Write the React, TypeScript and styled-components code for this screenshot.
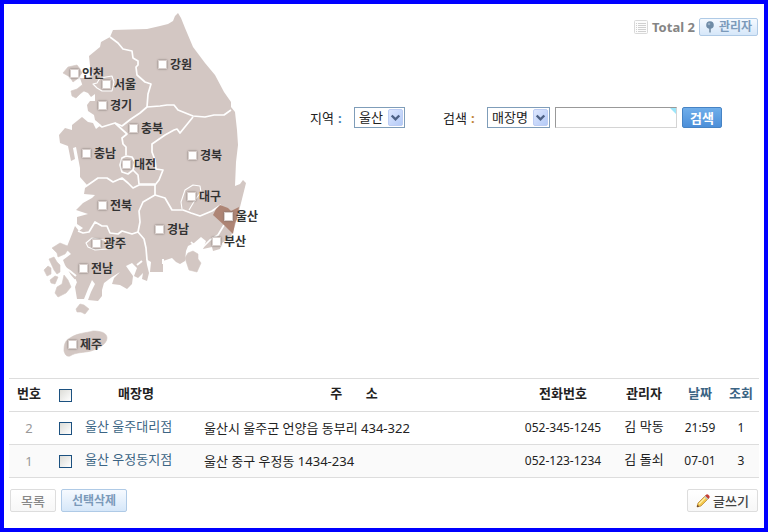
import React from "react";
import styled, { createGlobalStyle, css } from "styled-components";

const GlobalStyle = createGlobalStyle`
  *, *::before, *::after { box-sizing: border-box; }
  body {
    margin: 0;
    background: #fff;
    color: #222;
    font: 13px/18px "Noto Sans", "Noto Sans CJK KR", sans-serif;
  }
  button, select, input { font: inherit; color: inherit; margin: 0; }
  a { color: #3b6484; text-decoration: none; }
`;

const Frame = styled.div`
  min-height: 100vh;
  padding: 0 5px;
  border: 4px solid #00f;
`;

const Top = styled.section`
  display: flex;
  height: 374px;
`;

const MapCanvas = styled.div`
  position: relative;
  flex: none;
  width: 230px;
  height: 352px;
  margin: 4px 40px 0 31px;
`;

const MapDrawing = styled.svg`
  display: block;
  width: 100%;
  height: 100%;
`;

const Pin = styled.label<{ $x: number; $y: number }>`
  position: absolute;
  left: ${(p) => p.$x - 44}px;
  top: ${(p) => p.$y - 17}px;
  display: flex;
  align-items: center;
  gap: 3px;
  font: bold 12px/18px "Noto Sans CJK KR", sans-serif;
  color: #333;
  white-space: nowrap;
`;

const PinBox = styled.input`
  appearance: none;
  width: 9px;
  height: 9px;
  background: #fff;
  border: 1px solid #d8cfcc;
  box-shadow: 0 0 2px #776c69;
`;

const Side = styled.div`
  flex: 1;
  min-width: 0;
  display: flex;
  flex-direction: column;
`;

const TopBar = styled.div`
  display: flex;
  align-items: center;
  justify-content: flex-end;
  gap: 4px;
  margin-top: 14px;
  padding-right: 1px;
  height: 18px;
`;

const Total = styled.strong`
  font: bold 13px/18px "Noto Sans", sans-serif;
  color: #858585;
`;

const SearchForm = styled.form`
  display: flex;
  align-items: center;
  gap: 5px;
  margin-top: 71px;
`;

const FieldLabel = styled.label`
  width: 39px;
  padding-top: 1px;
  white-space: nowrap;
`;

const Colon = styled.span<{ $color: string }>`
  margin-left: 4px;
  font-weight: bold;
  color: ${(p) => p.$color};
`;

const SelectWrap = styled.span<{ $width: number; $after?: number }>`
  position: relative;
  flex: none;
  width: ${(p) => p.$width}px;
  height: 21px;
  margin-right: ${(p) => p.$after ?? 0}px;
`;

const Select = styled.select`
  appearance: none;
  display: block;
  width: 100%;
  height: 21px;
  padding: 0 18px 1px 4px;
  border: 1px solid #7f9db9;
  border-radius: 0;
  background: #fff;
  line-height: 18px;
`;

const SelectArrow = styled.svg`
  position: absolute;
  top: 2px;
  right: 2px;
  width: 15px;
  height: 17px;
  pointer-events: none;
`;

const QueryWrap = styled.span`
  position: relative;
  flex: none;
  width: 122px;
  height: 21px;
`;

const Query = styled.input`
  display: block;
  width: 100%;
  height: 21px;
  padding: 0 4px;
  border: 1px solid;
  border-color: #999 #d4d4d4 #d4d4d4 #999;
  background: #fff;
`;

const Corner = styled.span`
  position: absolute;
  top: 1px;
  right: 1px;
  border-top: 6px solid #9ce6fa;
  border-left: 6px solid transparent;
`;

const SearchButton = styled.button`
  flex: none;
  width: 40px;
  height: 21px;
  padding: 0;
  border: 1px solid #4683c4;
  border-radius: 2px;
  background: linear-gradient(#70aeea, #4c8fd9);
  color: #fff;
  font-weight: bold;
  line-height: 18px;
`;

const Table = styled.table`
  width: 100%;
  table-layout: fixed;
  border-collapse: collapse;
  border-top: 1px solid #ddd;
`;

const Col = styled.col<{ $width?: number }>`
  width: ${(p) => (p.$width ? `${p.$width}px` : "auto")};
`;

const Row = styled.tr<{ $shaded?: boolean }>`
  height: 33px;
  border-bottom: 1px solid #ddd;
  background: ${(p) => (p.$shaded ? "#fafafa" : "#fff")};
`;

const Head = styled.th`
  padding: 0 0 4px;
  white-space: pre;
  font-weight: bold;
`;

const cellNumber = css`
  font-size: 12px;
`;

const Cell = styled.td<{ $kind?: "index" | "name" | "address" | "number" }>`
  padding: ${(p) =>
    p.$kind === "name" ? "0 0 4px 6px" : p.$kind === "address" ? "0 0 0 11px" : p.$kind ? "0" : "0 0 4px"};
  text-align: ${(p) => (p.$kind === "name" || p.$kind === "address" ? "left" : "center")};
  color: ${(p) => (p.$kind === "index" ? "#999" : "#222")};
  white-space: nowrap;
  ${(p) => p.$kind === "number" && cellNumber}
`;

const CheckCell = styled.td`
  padding: 0 0 0 2px;
  text-align: center;
`;

const Check = styled.input`
  appearance: none;
  display: block;
  width: 13px;
  height: 13px;
  margin: 0 auto;
  border: 1px solid #1c5180;
  background: linear-gradient(135deg, #dcdcd7, #fff);
`;

const Footer = styled.footer`
  display: flex;
  gap: 5px;
  padding: 11px 1px 16px;
`;

const Button = styled.button<{ $blue?: boolean; $small?: boolean; $end?: boolean }>`
  display: flex;
  align-items: center;
  justify-content: center;
  gap: ${(p) => (p.$small ? 4 : 3)}px;
  height: ${(p) => (p.$small ? 18 : 23)}px;
  padding: 0 ${(p) => (p.$small ? 5 : p.$end ? 8 : 10)}px;
  margin-left: ${(p) => (p.$end ? "auto" : "0")};
  border: 1px solid ${(p) => (p.$blue ? "#afcae6" : "#ddd")};
  border-radius: 2px;
  background: ${(p) => (p.$blue ? "linear-gradient(#f6faff, #d6e7f9)" : "linear-gradient(#fff, #f7f7f7)")};
  color: ${(p) => (p.$blue ? "#7b9aba" : p.$end ? "#444" : "#888")};
  font-size: ${(p) => (p.$blue ? 12 : 13)}px;
  font-weight: ${(p) => (p.$blue ? "bold" : 500)};
  line-height: 16px;
  white-space: nowrap;
`;

const Icon = styled.svg`
  flex: none;
  display: block;
`;

const regions: [string, number, number][] = [
  ["강원", 162, 64], ["인천", 74, 73], ["서울", 106, 84], ["경기", 102, 105],
  ["충북", 133, 128], ["충남", 86, 153], ["대전", 126, 164], ["경북", 192, 155],
  ["전북", 102, 205], ["대구", 191, 196], ["울산", 228, 216], ["경남", 159, 229],
  ["부산", 216, 241], ["광주", 96, 243], ["전남", 83, 268], ["제주", 72, 344],
];

const mainland =
  "M113 30 147 29 160 26 168 24 173 21 175 16 178 13 181 18 185 28 193 47 205 63 215 75 224 92 231 102 231 107 235 112 237 130 238 145 236 162 235 186 240 184 243 180 246 183 243 195 240 207 237 219 234 229 230 238 222 243 220 249 213 251 212 247 203 249 206 241 201 237 194 243 188 246 186 251 185 261 180 264 176 262 172 258 163 261 163 272 150 272 151 262 146 259 147 265 149 273 147 281 142 279 143 273 138 278 134 276 137 268 132 263 126 266 133 276 132 284 127 289 120 285 112 284 114 278 120 272 112 277 104 283 102 290 102 296 98 301 88 300 91 292 95 284 92 280 88 289 84 299 77 299 75 287 77 282 71 275 65 265 63 260 71 254 66 249 72 234 75 226 79 231 83 228 77 224 77 217 88 214 76 210 83 203 92 198 95 195 84 194 85 188 87 185 80 177 80 168 76 147 73 148 75 159 71 161 68 146 60 143 59 135 65 128 72 130 72 125 82 117 88 122 93 123 96 129 101 125 95 120 94 115 88 111 87 105 90 101 95 101 95 94 91 97 88 93 83 91 82 84 80 78 88 78 93 75 90 66 89 56 100 47 101 42 110 37Z";

const borders = [
  "M110 37 118 43 123 49 132 51 133 58 138 61 138 65 136 67 137 75 145 82 151 84 148 94 147 107 160 106 167 105 174 105 178 110 193 116 205 117 214 115 224 115 231 110",
  "M147 107 140 113 131 119 122 126 115 123 102 127 95 122",
  "M115 123 127 134 122 138 123 144 126 147 126 155",
  "M126 156 132 157 135 162 133 170 128 174 122 172 120 165 122 158Z",
  "M133 170 138 175 139 184 155 184",
  "M85 187 98 178 107 178 113 182 122 178 128 183 133 188 139 185 155 185 155 195",
  "M193 117 180 133 177 129 174 130 165 135 152 144 152 152 155 160 156 169 163 170 159 180 155 185",
  "M155 195 165 198 172 210 183 210 191 213 200 216 212 211 221 205",
  "M155 195 143 202 139 211 140 222 138 232 144 239 146 248 147 260",
  "M78 231 83 233 89 232 95 222 102 226 107 226 110 233 118 234 122 231 132 234 138 232",
  "M224 225 218 235 210 240 201 249",
  "M191 242 195 246 203 245",
];

const thinBorders = [
  "M86 243 92 238 104 240 111 245 107 249 95 250 88 247Z",
  "M182 209 181 202 185 190 193 185 200 186 201 192 195 200 189 210",
  "M93 84 97 83 100 78 112 76 114 82 112 91 102 91 97 88Z",
];

const islands = [
  "M63 73 68 67 77 65 80 69 82 73 77 79 73 82 70 77Z",
  "M71 91 77 89 82 85 85 90 80 94 76 98 72 96Z",
  "M185 258 188 253 193 251 198 254 198 259 201 263 197 272 189 270Z",
  "M52 248 60 243 70 247 65 254 58 257 57 253Z",
  "M44 270 48 266 51 268 51 274 47 276Z",
  "M49 259 54 257 57 262 60 265 60 272 57 274 54 270Z",
  "M50 280 55 276 58 277 55 284 51 283Z",
  "M55 293 57 287 62 284 64 275 68 280 71 287 66 293 58 297Z",
  "M76 309 80 304 84 305 89 309 85 314 81 312 77 312Z",
  "M64 351C64 344 65 341 70 338C77 333 86 333 93 331C99 331 107 332 107 338C107 344 98 349 91 351C83 353 76 352 70 356C66 357 65 354 64 351Z",
];

function KoreaMap() {
  return (
    <MapCanvas>
      <MapDrawing viewBox="40 8 230 352" aria-hidden="true">
        <path d={mainland} fill="#d3c7c3" />
        {islands.map((d) => <path key={d} d={d} fill="#d3c7c3" stroke="#d3c7c3" strokeWidth=".6" />)}
        <g fill="none" stroke="#fff" strokeLinejoin="round">
          {borders.map((d) => <path key={d} d={d} strokeWidth="1.7" />)}
          {thinBorders.map((d) => <path key={d} d={d} strokeWidth="1.1" />)}
          <path d="M64 267 70 271 76 276M68 276 71 282 76 280M137 265 142 261M163 259 163 264" strokeWidth="2" />
        </g>
        <path d="M213 215 216 209 220 205 228 208 231 211 239 207 237 219 235 223 233 234 229 230 224 225Z" fill="#ae8575" />
      </MapDrawing>
      {regions.map(([name, x, y]) => (
        <Pin key={name} $x={x} $y={y}>
          <PinBox type="checkbox" />
          {name}
        </Pin>
      ))}
    </MapCanvas>
  );
}

function Arrow() {
  return (
    <SelectArrow viewBox="0 0 15 17" aria-hidden="true">
      <defs>
        <linearGradient id="arrowFill" x2="1" y2="1">
          <stop stopColor="#dfe8ff" />
          <stop offset="1" stopColor="#b2c9f6" />
        </linearGradient>
      </defs>
      <rect x=".5" y=".5" width="14" height="16" rx="1.5" fill="url(#arrowFill)" stroke="#bdcdf4" />
      <path d="m3.7 6.5 3.8 3.8 3.8-3.8" fill="none" stroke="#4d6185" strokeWidth="2.4" />
    </SelectArrow>
  );
}

const stores = [
  { no: 2, name: "울산 울주대리점", address: "울산시 울주군 언양읍 동부리 434-322", phone: "052-345-1245", manager: "김 막동", date: "21:59", views: 1 },
  { no: 1, name: "울산 우정동지점", address: "울산 중구 우정동 1434-234", phone: "052-123-1234", manager: "김 돌쇠", date: "07-01", views: 3 },
];

export default function App() {
  return (
    <>
      <GlobalStyle />
      <Frame>
        <Top>
          <KoreaMap />
          <Side>
            <TopBar>
              <Icon width="14" height="14" viewBox="0 0 14 14" aria-hidden="true">
                <rect x=".5" y=".5" width="13" height="13" rx="1" fill="#fcfcfc" stroke="#d9d9d9" />
                <path d="M2 3.5h1M4 3.5h8M2 5.5h1M4 5.5h8M2 7.5h1M4 7.5h8M2 9.5h1M4 9.5h8M2 11.5h1M4 11.5h8" stroke="#d0d0d0" />
              </Icon>
              <Total>Total 2</Total>
              <Button type="button" $blue $small>
                <Icon width="10" height="12" viewBox="0 0 10 12" aria-hidden="true">
                  <path d="M4 6h2v5.500H4z" fill="#8aa0b5" />
                  <circle cx="5" cy="4" r="3.8" fill="#6f8ba6" />
                  <circle cx="4" cy="3" r="1.3" fill="#9ab0c5" />
                </Icon>
                관리자
              </Button>
            </TopBar>
            <SearchForm onSubmit={(e) => e.preventDefault()}>
              <FieldLabel htmlFor="region">지역<Colon $color="#3f7cae">:</Colon></FieldLabel>
              <SelectWrap $width={51} $after={33}>
                <Select id="region" defaultValue="울산">
                  {regions.map(([name]) => <option key={name}>{name}</option>)}
                </Select>
                <Arrow />
              </SelectWrap>
              <FieldLabel htmlFor="query">검색<Colon $color="#c08436">:</Colon></FieldLabel>
              <SelectWrap $width={63}>
                <Select aria-label="검색 항목">
                  <option>매장명</option>
                </Select>
                <Arrow />
              </SelectWrap>
              <QueryWrap>
                <Query id="query" type="text" />
                <Corner />
              </QueryWrap>
              <SearchButton type="submit">검색</SearchButton>
            </SearchForm>
          </Side>
        </Top>
        <Table>
          <colgroup>
            <Col $width={40} />
            <Col $width={30} />
            <Col $width={114} />
            <Col />
            <Col $width={96} />
            <Col $width={66} />
            <Col $width={46} />
            <Col $width={36} />
          </colgroup>
          <thead>
            <Row>
              <Head>번호</Head>
              <CheckCell as="th"><Check type="checkbox" aria-label="전체 선택" /></CheckCell>
              <Head>매장명</Head>
              <Head>{"주\u00a0\u00a0\u00a0\u00a0\u00a0\u00a0\u00a0소"}</Head>
              <Head>전화번호</Head>
              <Head>관리자</Head>
              <Head><a href="#date">날짜</a></Head>
              <Head><a href="#views">조회</a></Head>
            </Row>
          </thead>
          <tbody>
            {stores.map((s) => (
              <Row key={s.no} $shaded={s.no === 1}>
                <Cell $kind="index">{s.no}</Cell>
                <CheckCell><Check type="checkbox" aria-label={s.name} /></CheckCell>
                <Cell $kind="name"><a href={`#store-${s.no}`}>{s.name}</a></Cell>
                <Cell $kind="address">{s.address}</Cell>
                <Cell $kind="number">{s.phone}</Cell>
                <Cell>{s.manager}</Cell>
                <Cell $kind="number">{s.date}</Cell>
                <Cell $kind="number">{s.views}</Cell>
              </Row>
            ))}
          </tbody>
        </Table>
        <Footer>
          <Button type="button">목록</Button>
          <Button type="button" $blue>선택삭제</Button>
          <Button type="button" $end>
            <Icon width="14" height="14" viewBox="0 0 14 14" aria-hidden="true">
              <path d="m1 13 1-4 7.5-7.5 3 3L5 12z" fill="#f3c649" stroke="#b98a3c" strokeWidth=".8" />
              <path d="m3 10 7.5-7.5" stroke="#fff0a8" strokeWidth="1.2" />
              <path d="m9 2 1.5-1.5c1-1 4 1.800 3 3L12 5z" fill="#c43d35" />
              <path d="m8.3 2.7.9-.9 3 3-.9.9z" fill="#b9c4cc" />
              <path d="m1 13 .6-2.2L3.2 12.4z" fill="#5a3324" />
            </Icon>
            글쓰기
          </Button>
        </Footer>
      </Frame>
    </>
  );
}
